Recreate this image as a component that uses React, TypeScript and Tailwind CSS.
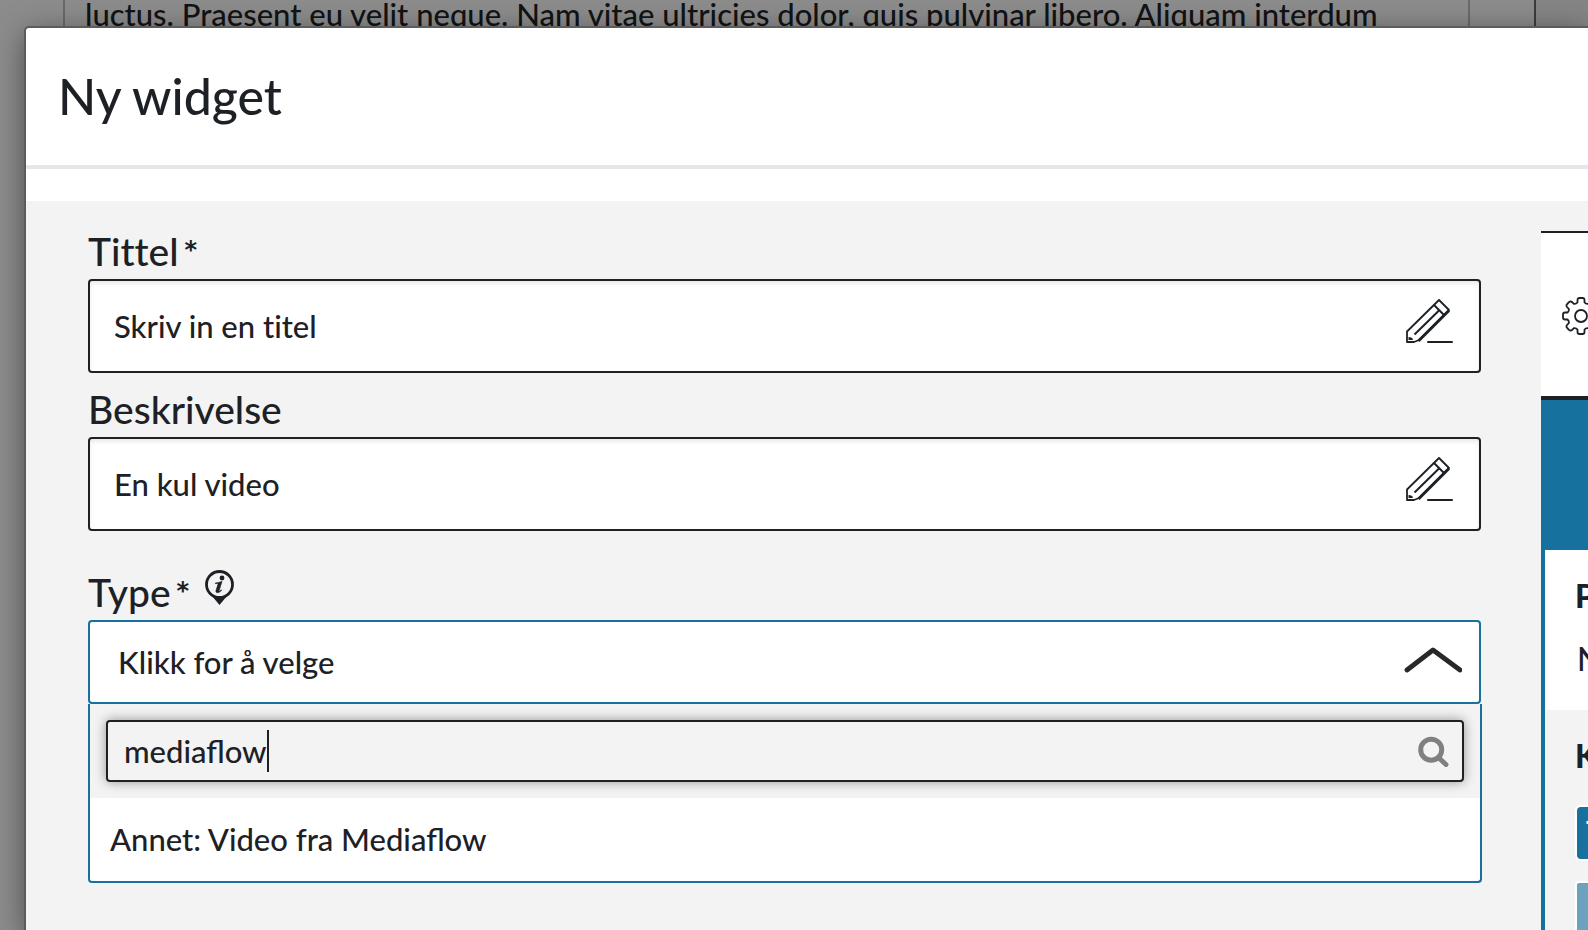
import { useState } from "react";
import type { ReactNode } from "react";

function PencilIcon() {
  return (
    <svg className="h-12 w-12 shrink-0" viewBox="0 0 48 48" fill="none" stroke="#1d2125" strokeWidth="1.8" aria-hidden="true">
      <path d="M34 2 44 12 14 42 9 44H2V33.500L34 2Z" strokeLinejoin="round" />
      <path d="M44 12.500 13.500 43" strokeWidth="2.800" />
      <path d="M29 7 39 17" strokeWidth="2" />
      <path d="M34 12.500 9.500 36.500" strokeWidth="2" />
      <path d="M3.500 39v3H8c-.2-1-.8-2-1.500-2.200-.7-.6-1.700-.8-3-.8Z" fill="#1d2125" stroke="none" />
      <path d="M23 44h24" strokeLinecap="round" strokeWidth="2" />
    </svg>
  );
}

function InfoIcon() {
  return (
    <svg className="h-[35px] w-[29px]" viewBox="0 0 29 35" aria-hidden="true">
      <path d="M2 20 14.500 35 27 20Z" fill="#1d2125" />
      <circle cx="14.500" cy="14.500" r="13" fill="#f3f3f3" stroke="#1d2125" strokeWidth="2.800" />
      <circle cx="17" cy="8" r="2.400" fill="#1d2125" />
      <path d="M10.300 13c2-.2 4.200-.8 6.700-1.600l-3 9.600c-.2.900.9.100 2-1.200l.6.500c-1.800 2.600-6.500 3.600-5.600.3l2-6.500c.2-.8-1-.6-2.700-.5Z" fill="#1d2125" stroke="#1d2125" strokeWidth="0.600" />
    </svg>
  );
}

function ChevronIcon() {
  return (
    <svg className="h-[26px] w-[58px] shrink-0" viewBox="0 0 58 26" fill="none" stroke="#26282a" strokeWidth="4.800" strokeLinecap="round" strokeLinejoin="round" aria-hidden="true">
      <path d="M3 23 29 3 56 23" />
    </svg>
  );
}

function SearchIcon() {
  return (
    <svg className="h-[31px] w-[31px] shrink-0" viewBox="0 0 31 31" fill="none" stroke="#808080" aria-hidden="true">
      <circle cx="13.200" cy="13.700" r="10.500" strokeWidth="5" />
      <path d="M21 22 28 28.500" strokeWidth="5" strokeLinecap="round" />
    </svg>
  );
}

function GearIcon() {
  return (
    <svg className="h-[38px] w-[38px] shrink-0" viewBox="0 0 38 38" fill="none" stroke="#1d2125" strokeWidth="1.800" strokeLinejoin="round" aria-hidden="true">
      <path d="M15.500 5.500V3q0-2 2-2h3q2 0 2 2v2.500q1.500 1.700 3.600 1.300L28 5q1.500-1.200 3 .2l1.800 1.800q1.400 1.500.2 3l-1.800 1.900q-.4 2.100 1.300 3.600H35q2 0 2 2v3q0 2-2 2h-2.500q-1.700 1.500-1.300 3.600L33 28q1.200 1.500-.2 3L31 32.800q-1.500 1.400-3 .2l-1.900-1.800q-2.100-.4-3.600 1.300V35q0 2-2 2h-3q-2 0-2-2v-2.500q-1.500-1.700-3.600-1.300L10 33q-1.500 1.200-3-.2L5.200 31q-1.400-1.500-.2-3l1.800-1.900q.4-2.100-1.300-3.600H3q-2 0-2-2v-3q0-2 2-2h2.500q1.700-1.500 1.300-3.600L5 10q-1.200-1.500.2-3L7 5.200q1.500-1.400 3-.2l1.900 1.800q2.100.4 3.600-1.300Z" />
      <circle cx="19" cy="19" r="6" />
    </svg>
  );
}

function Label({ htmlFor, required, children }: { htmlFor: string; required?: boolean; children: ReactNode }) {
  return (
    <label htmlFor={htmlFor} className="flex gap-1.5 text-[39px] leading-[48px]">
      {children}
      {required && <span className="font-['DejaVu_Sans',sans-serif] text-[24px] font-bold leading-[46px]">*</span>}
    </label>
  );
}

function TextField({ id, label, required, initial }: { id: string; label: string; required?: boolean; initial: string }) {
  const [value, setValue] = useState(initial);
  return (
    <div className="flex flex-col gap-1 [font-variant-ligatures:no-common-ligatures]">
      <Label htmlFor={id} required={required}>{label}</Label>
      <div className="flex h-[94px] items-center rounded-[4px] border-2 border-[#1d2125] bg-white pr-[26px] pl-6 shadow-[inset_0_3px_4px_rgba(0,0,0,0.08)]">
        <input
          id={id}
          value={value}
          onChange={(e) => setValue(e.target.value)}
          className="min-w-0 flex-1 bg-transparent text-[31px] leading-10 outline-none"
        />
        <div className="pb-2"><PencilIcon /></div>
      </div>
    </div>
  );
}

function TypeSelect() {
  const [query, setQuery] = useState("mediaflow");
  return (
    <div className="flex flex-col gap-1 pt-[37px]">
      <div className="flex gap-4">
        <Label htmlFor="type" required>Type</Label>
        <button type="button" aria-label="Info" className="mt-0.5 h-[35px]"><InfoIcon /></button>
      </div>
      <div>
        <button
          id="type"
          type="button"
          aria-expanded="true"
          className="flex h-[84px] w-full items-center justify-between rounded-[4px] border-2 border-[#17719e] bg-white pr-[17px] pl-7 text-[31px] leading-10"
        >
          <span>Klikk for å velge</span>
          <span className="pb-1"><ChevronIcon /></span>
        </button>
        <div className="-mr-px rounded-b-[4px] border-2 border-t-0 border-[#17719e] bg-white">
          <div className="bg-[#f3f3f3] p-4">
            <div className="flex h-[62px] items-center rounded-[4px] border-2 border-[#1d2125] bg-[#f3f3f3] pr-[13px] pl-4 shadow-[0_0_12px_rgba(0,0,0,0.4)]">
              <div className="flex min-w-0 flex-1 items-center">
                <input
                  aria-label="Søk"
                  value={query}
                  onChange={(e) => setQuery(e.target.value)}
                  className="field-sizing-content max-w-full bg-transparent text-[31px] leading-10 outline-none"
                />
                <span className="h-[42px] w-0.5 bg-[#1d2125]" />
              </div>
              <SearchIcon />
            </div>
          </div>
          <ul>
            <li className="px-5 pt-[21px] pb-[22px] text-[31px] leading-10">Annet: Video fra Mediaflow</li>
          </ul>
        </div>
      </div>
    </div>
  );
}

function PreviewPanel() {
  return (
    <aside className="flex w-[47px] shrink-0 flex-col overflow-hidden text-[32px] leading-10">
      <div className="flex h-[169px] shrink-0 items-center border-t-2 border-b-4 border-[#1d2125] bg-white pt-0.5 pl-[21px]">
        <GearIcon />
      </div>
      <div className="h-[150px] shrink-0 bg-[#17719e]" />
      <div className="flex flex-1 flex-col border-l-4 border-[#17719e]">
        <div className="flex h-[160px] shrink-0 flex-col gap-[23px] bg-white pt-[26px] pl-[30px]">
          <strong className="font-black">P</strong>
          <span className="pl-0.5">N</span>
        </div>
        <div className="flex flex-col pt-[26px] pl-[30px]">
          <strong className="font-black">K</strong>
          <div className="mt-[29px] flex h-14 w-40 items-center rounded-[6px] border-2 border-white bg-[#17719e] pl-[9px] text-white">T</div>
          <div className="mt-5 h-14 w-40 rounded-t-[4px] border-2 border-b-0 border-white bg-[#6ba2be]" />
        </div>
      </div>
    </aside>
  );
}

export default function App() {
  return (
    <div className="relative min-h-screen overflow-hidden bg-[#8c8c8c] font-['Lato','PT_Sans',sans-serif] font-medium text-[#1d2125]">
      <div className="flex h-8 pl-[63px]">
        <p className="flex-1 border-x-2 border-[#6a6a6a] pl-5 text-[31px] leading-7 whitespace-nowrap text-[#111315]">
          luctus. Praesent eu velit neque. Nam vitae ultricies dolor, quis pulvinar libero. Aliquam interdum
        </p>
        <div className="ml-16 w-[54px] border-l-2 border-[#3c3c3c] bg-[#858585]" />
      </div>
      <div
        role="dialog"
        aria-labelledby="dialog-title"
        className="absolute top-7 right-0 bottom-0 left-[26px] flex flex-col rounded-tl-[3px] bg-white shadow-[0_0_0_2px_#5c5c5c,0_6px_30px_rgba(0,0,0,0.5)]"
      >
        <header className="border-b-4 border-[#e3e7ea] px-8 pt-9 pb-[37px]">
          <h1 id="dialog-title" className="text-[50px] leading-[64px]">Ny widget</h1>
        </header>
        <div className="mt-8 flex min-h-0 flex-1 bg-[#f3f3f3]">
          <form className="flex min-w-0 flex-1 flex-col pt-[26px] pr-[60px] pl-[62px]">
            <div className="flex flex-col gap-3">
              <TextField id="title" label="Tittel" required initial="Skriv in en titel" />
              <TextField id="description" label="Beskrivelse" initial="En kul video" />
            </div>
            <TypeSelect />
          </form>
          <div className="flex pt-[30px]">
            <PreviewPanel />
          </div>
        </div>
      </div>
    </div>
  );
}
